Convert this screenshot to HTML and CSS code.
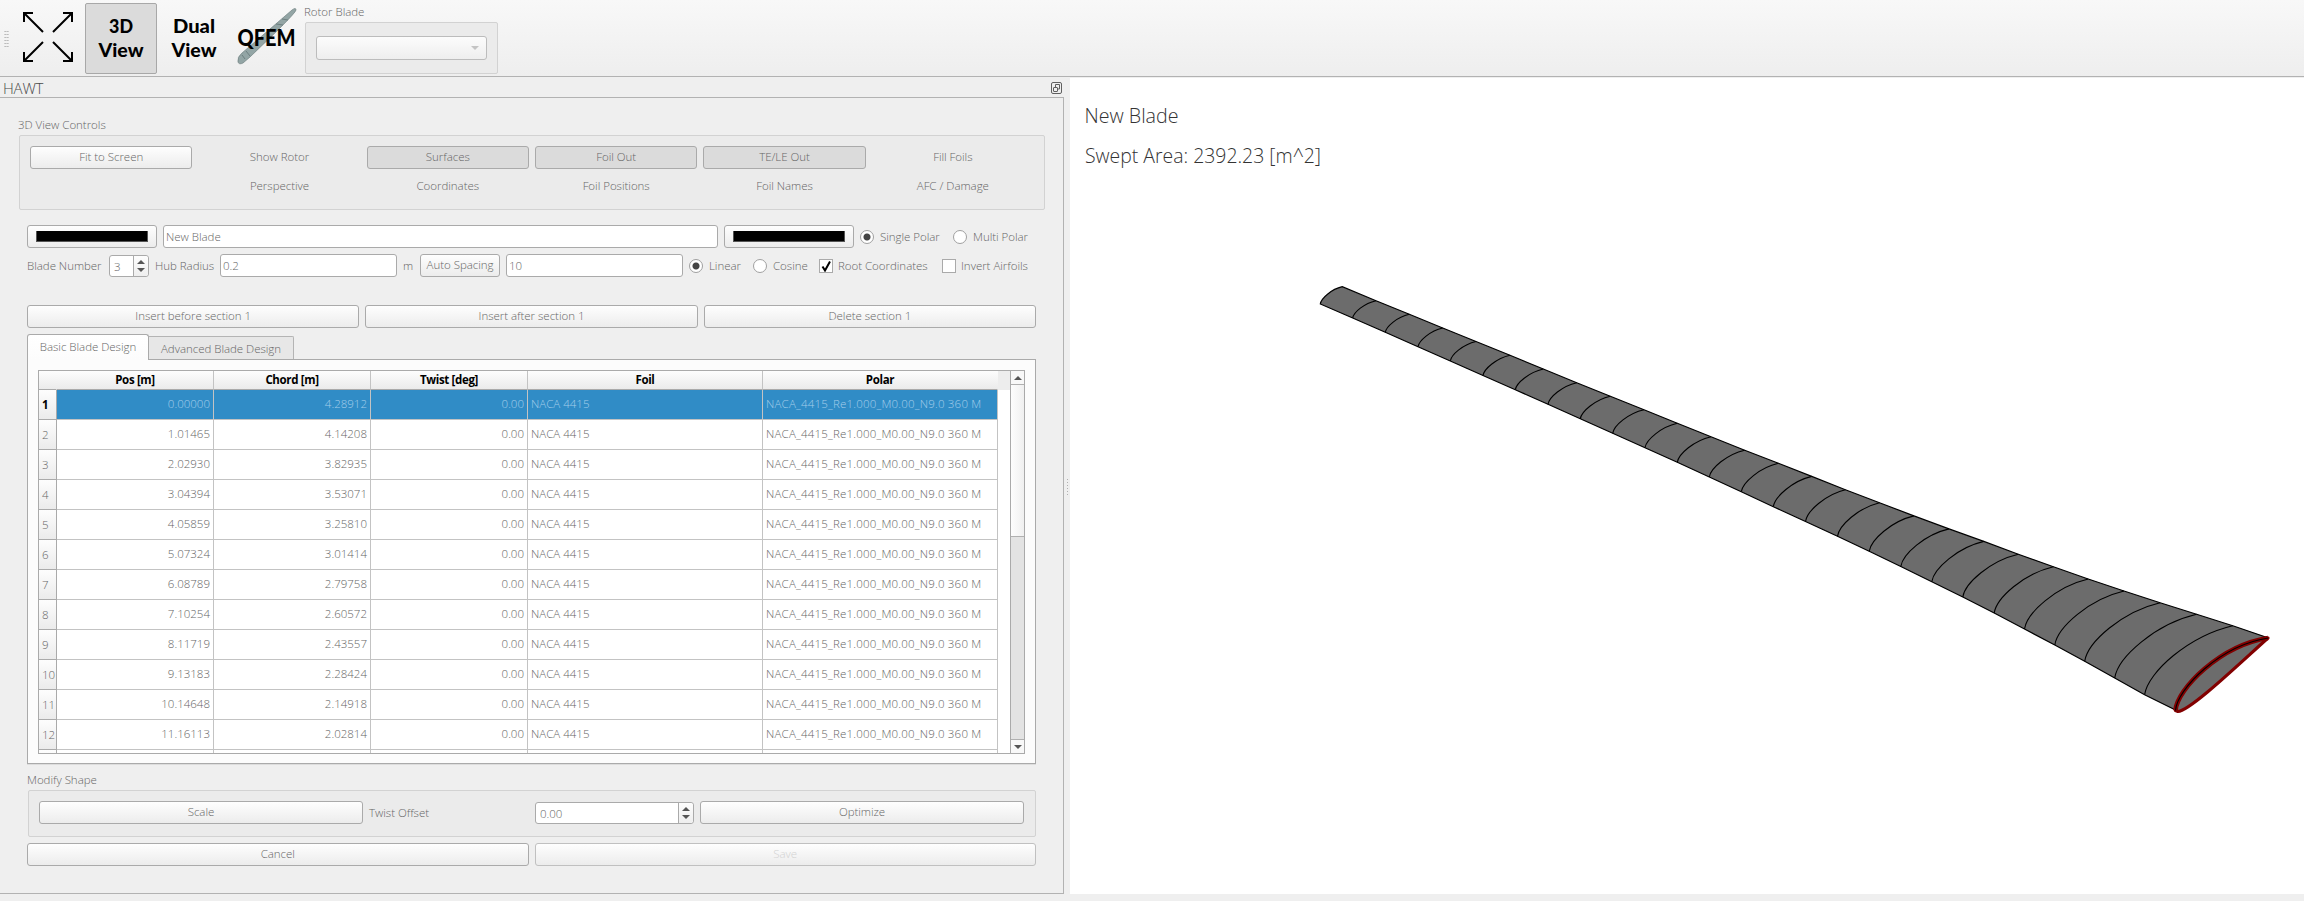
FILE: index.html
```html
<!DOCTYPE html>
<html lang="en">
<head>
<meta charset="utf-8">
<title>HAWT Blade Design</title>
<link rel="stylesheet" href="styles.css">
</head>
<body>
<header class="toolbar">
  <span class="grip"></span>
  <svg class="expand" width="52" height="52" viewBox="0 0 52 52"><g fill="none" stroke="#000" stroke-width="2"><path d="M21 21 2 2M2 11V2H11"/><path d="M31 21 50 2M41 2H50V11"/><path d="M21 31 2 50M2 41V50H11"/><path d="M31 31 50 50M50 41V50H41"/></g></svg>
  <button class="view-btn checked"><svg width="70" height="69"><text x="35" y="28.500" textLength="24" lengthAdjust="spacingAndGlyphs">3D</text><text x="35" y="52.500" textLength="45" lengthAdjust="spacingAndGlyphs">View</text></svg></button>
  <button class="view-btn dual"><svg width="70" height="69"><text x="35" y="28.500" textLength="42" lengthAdjust="spacingAndGlyphs">Dual</text><text x="35" y="52.500" textLength="45" lengthAdjust="spacingAndGlyphs">View</text></svg></button>
  <button class="view-btn qfem"><svg width="64" height="69"><path class="qblade" d="M2 58Q1 53 6 49L34 25 56 6Q60 3 60 6Q60 8 42 26L14 53 7 59Q3 61 2 58Z"/><path class="qgrain" d="M34 25 41 26M40 20 47 21M46 15 52 16M10 47 14 52M6 51 9 55"/><text class="big" x="30.500" y="42" textLength="58" lengthAdjust="spacingAndGlyphs">QFEM</text></svg></button>
  <div class="rotor">
    <span class="label">Rotor Blade</span>
    <div class="frame"><div class="combo"><i class="arrow down pale"></i></div></div>
  </div>
</header>

<main class="workspace">
  <section class="dock">
    <div class="dock-title"><span>HAWT</span>
      <svg width="12" height="12" viewBox="0 0 12 12" fill="none" stroke="#606060"><rect x=".5" y=".5" width="10" height="11" rx="1.500"/><rect x="2.500" y="5.500" width="4" height="4" rx=".5"/><path d="M4.500 5V2.500H8.500V7H7"/></svg>
    </div>
    <div class="dock-body">
      <div class="label g1">3D View Controls</div>
      <div class="frame controls">
        <button class="btn">Fit to Screen</button><span>Show Rotor</span><button class="btn on">Surfaces</button><button class="btn on">Foil Out</button><button class="btn on">TE/LE Out</button><span>Fill Foils</span>
        <span></span><span>Perspective</span><span>Coordinates</span><span>Foil Positions</span><span>Foil Names</span><span>AFC / Damage</span>
      </div>
      <div class="row name-row">
        <button class="btn color"><i></i></button>
        <div class="field name">New Blade</div>
        <button class="btn color"><i></i></button>
        <i class="radio sel"></i><span class="w-single">Single Polar</span>
        <i class="radio"></i><span>Multi Polar</span>
      </div>
      <div class="row param-row">
        <span class="w-number">Blade Number</span>
        <div class="spin small"><span>3</span><b><i class="arrow up"></i><i class="arrow down"></i></b></div>
        <span class="w-hub">Hub Radius</span>
        <div class="field num">0.2</div>
        <span class="w-m">m</span>
        <button class="btn auto">Auto Spacing</button>
        <div class="field num2">10</div>
        <i class="radio sel"></i><span class="w-linear">Linear</span>
        <i class="radio"></i><span class="w-cosine">Cosine</span>
        <i class="check"><svg width="12" height="12"><path d="M2.500 6.500 5 10.500 10 1.500" fill="none" stroke="#000" stroke-width="2"/></svg></i><span class="w-root">Root Coordinates</span>
        <i class="check"></i><span>Invert Airfoils</span>
      </div>
      <div class="row thirds">
        <button class="btn">Insert before section 1</button><button class="btn">Insert after section 1</button><button class="btn">Delete section 1</button>
      </div>
      <div class="tabs"><div class="tab active">Basic Blade Design</div><div class="tab">Advanced Blade Design</div></div>
      <div class="pane">
        <div class="table">
          <div class="grid" id="grid">
            <div class="tr head"><div></div><div>Pos [m]</div><div>Chord [m]</div><div>Twist [deg]</div><div>Foil</div><div>Polar</div></div>
          </div>
          <div class="side"></div>
          <div class="scroll"><div class="sb"><i class="arrow up"></i></div><div class="thumb"></div><div class="trough"></div><div class="sb last"><i class="arrow down"></i></div></div>
        </div>
      </div>
      <div class="label g2">Modify Shape</div>
      <div class="frame modify">
        <button class="btn wide">Scale</button>
        <span class="w-twist">Twist Offset</span>
        <div class="spin offset"><span>0.00</span><b><i class="arrow up"></i><i class="arrow down"></i></b></div>
        <button class="btn wide">Optimize</button>
      </div>
      <div class="row final"><button class="btn">Cancel</button><button class="btn disabled">Save</button></div>
    </div>
  </section>
  <div class="splitter"><i></i></div>
  <section class="view3d">
    <svg id="scene" width="1234" height="816" viewBox="1070 78 1234 816">
      <text x="1084.500" y="123" textLength="94" lengthAdjust="spacingAndGlyphs">New Blade</text>
      <text x="1085" y="163" textLength="236" lengthAdjust="spacingAndGlyphs">Swept Area: 2392.23 [m^2]</text>
    </svg>
  </section>
</main>
<script src="app.js"></script>
</body>
</html>
```
FILE: app.js
```js
// Blade sections: position and chord, twist is zero everywhere
const sections = [
  ["0.00000", "4.28912"], ["1.01465", "4.14208"], ["2.02930", "3.82935"],
  ["3.04394", "3.53071"], ["4.05859", "3.25810"], ["5.07324", "3.01414"],
  ["6.08789", "2.79758"], ["7.10254", "2.60572"], ["8.11719", "2.43557"],
  ["9.13183", "2.28424"], ["10.14648", "2.14918"], ["11.16113", "2.02814"],
];
const grid = document.getElementById("grid");
sections.forEach(([pos, chord], i) => {
  const tr = document.createElement("div");
  tr.className = "tr" + (i === 0 ? " selected" : "");
  tr.innerHTML = [i + 1, pos, chord, "0.00", "NACA 4415", "NACA_4415_Re1.000_M0.00_N9.0 360 M"]
    .map(v => `<div>${v}</div>`).join("");
  grid.append(tr);
});
const stub = document.createElement("div");
stub.className = "tr stub";
stub.innerHTML = "<div></div>".repeat(6);
grid.append(stub);

// Projected trailing and leading edge points, from tip to root
const te = [[1342.3,286.7],[1376,300.7],[1409.3,314.3],[1442.7,328],[1476,341.5],[1510,355.3],[1543.3,369],[1576.7,382.7],[1610.3,396.3],[1644,409.7],[1677.3,423.3],[1711,436.7],[1744.7,450.2],[1778.4,463.3],[1811.7,476.4],[1845.4,489.7],[1879.5,502.7],[1913.9,515.9],[1949,528.9],[1983.8,541.4],[2018.3,554.2],[2053.4,566.7],[2088.2,579],[2124,591],[2160.1,602.7],[2196.6,614.3],[2232.8,625.7],[2267.6,637.6]];
const le = [[1320.3,304],[1352.7,318],[1385.3,332.3],[1418,346.7],[1450.3,361],[1483,375.5],[1515.3,389.7],[1548,404.3],[1580.3,418.8],[1612.7,433.3],[1645,447.7],[1677.3,462.3],[1709.3,477],[1741.3,491.7],[1773.3,506.7],[1805.5,521.5],[1837.5,536.3],[1869.2,551.3],[1900.8,566.5],[1931.8,581.7],[1962.8,597],[1994.2,613],[2024.5,629],[2054.8,645],[2084.7,661.3],[2114.7,678],[2144.6,694.7],[2175.6,710]];
const ns = "http://www.w3.org/2000/svg";
const scene = document.getElementById("scene");
const path = (d, cls) => {
  const p = document.createElementNS(ns, "path");
  p.setAttribute("d", d);
  p.setAttribute("class", cls);
  scene.append(p);
};
const arc = (l, t) => {
  const dx = t[0] - l[0], dy = t[1] - l[1];
  return `C${l[0] + .04 * dx} ${l[1] + .33 * dy} ${l[0] + .5 * dx} ${l[1] + .85 * dy} ${t[0]} ${t[1]}`;
};
path(`M${le[0]}${arc(le[0], te[0])}L${te.slice(1).join("L")}L${le.slice().reverse().join("L")}Z`, "skin");
le.slice(1, -1).forEach((l, i) => path(`M${l}${arc(l, te[i + 1])}`, "rib"));
const upper = "M2175.500 710.500C2177 689 2220 645.500 2268 638";
path(upper + "C2240 663 2190 711 2178 711.500L2175.500 710.500Z", "root");
path(upper, "root-upper");
path(upper, "rib");
```
FILE: styles.css
```css
* { box-sizing: border-box; }
body { margin: 0; width: 2304px; height: 901px; overflow: hidden; background: #efefef; color: #666; font: 300 11.5px/14px "Open Sans", "Noto Sans", sans-serif; letter-spacing: -.03px; }
button { font: inherit; color: inherit; letter-spacing: inherit; padding: 0; }
.toolbar { height: 77px; display: flex; border-bottom: 1px solid #b2b2b2; background: linear-gradient(#f8f8f8, #eeeeee); }
.grip { width: 5px; height: 17px; margin: 30px 13px 0 4px; background: radial-gradient(circle, #b4b4b4 .7px, transparent 1px) 0 0 / 2.500px 3px; }
.expand { margin: 11px 11px 0 0; }
.view-btn { width: 72px; height: 71px; margin-top: 3px; border: 1px solid transparent; border-radius: 2px; background: none; }
.view-btn svg { display: block; overflow: visible; }
.view-btn text { font: 900 19px Lato, sans-serif; letter-spacing: 0; fill: #000; text-anchor: middle; }
.view-btn.checked { background: #dbdbdb; border-color: #a8a8a8; }
.view-btn.dual { margin-left: 1px; }
.view-btn.qfem { width: 66px; margin-left: 5px; }
.view-btn text.big { font-size: 23px; }
.qblade { fill: #93a5a5; stroke: #718282; stroke-width: .7; }
.qgrain { fill: none; stroke: #6d7f80; }
.rotor { margin-left: 4px; padding-top: 5px; }
.rotor .label { display: block; height: 17px; margin-left: -1px; }
.frame { border: 1px solid #d2d2d2; border-radius: 2px; background: #ebebeb; }
.rotor .frame { width: 193px; height: 52px; padding: 13px 10px; }
.combo { height: 24px; border: 1px solid #bcbcbc; border-radius: 3px; background: linear-gradient(#fcfcfc, #eee); display: flex; align-items: center; justify-content: flex-end; padding-right: 7px; }
.arrow { width: 0; height: 0; border: 4px solid transparent; }
.arrow.down { border-top-color: #555; border-bottom: 0; }
.arrow.up { border-bottom-color: #555; border-top: 0; }
.arrow.pale { border-top-color: #c4c4c4; }

.workspace { display: flex; height: 817px; }
.dock { width: 1064px; height: 817px; display: flex; flex-direction: column; }
.dock-title { height: 20px; flex: none; display: flex; justify-content: space-between; padding: 4px 1px 0 3px; font-size: 15px; line-height: 14px; color: #484848; letter-spacing: -.2px; }
.dock-title svg { margin-top: 1px; }
.dock-body { flex: 1; border: 1px solid #b2b2b2; border-left: 0; padding: 20px 27px 0 27px; }
.label.g1 { margin-left: -9px; height: 17px; }
.controls { width: 1026px; height: 75px; margin-left: -8px; padding: 10px; display: grid; grid-template-columns: repeat(6, 1fr); grid-auto-rows: 23px; gap: 6px; }
.controls span { text-align: center; line-height: 22px; }
.btn { height: 23px; border: 1px solid #aaa; border-radius: 3px; background: linear-gradient(#fefefe, #ececec); display: flex; align-items: center; justify-content: center; padding-bottom: 1px; }
.btn.on { background: #dbdbdb; }
.btn.disabled { color: #d2d2d2; border-color: #c0c0c0; }
.row { display: flex; width: 1009px; }
.name-row { margin-top: 15px; align-items: center; height: 23px; white-space: nowrap; }
.color { width: 130px; margin-right: 6px; padding: 0; }
.color i { width: 112px; height: 11px; background: #000; border: 1px solid #555; border-top: 0; }
.field { height: 23px; border: 1px solid #aaa; border-radius: 3px; background: #fff; padding: 4px 2px; }
.name { width: 555px; margin-right: 6px; }
.radio { flex: none; width: 14px; height: 14px; border-radius: 50%; border: 1px solid #a0a0a0; background: #fff; margin-right: 6px; }
.radio.sel { background: radial-gradient(circle, #444 3px, #fff 4px); }
.w-single { width: 73px; }
.param-row { margin-top: 6px; height: 23px; align-items: center; white-space: nowrap; }
.w-number { width: 82px; }
.spin { display: flex; height: 22px; margin-top: 1px; border: 1px solid #aaa; border-radius: 3px; background: #fff; }
.spin span { flex: 1; padding: 4px; }
.spin b { width: 15px; border-left: 1px solid #aaa; background: linear-gradient(#fdfdfd, #eee); border-radius: 0 3px 3px 0; display: flex; flex-direction: column; align-items: center; justify-content: center; gap: 4px; }
.small { width: 40px; margin-right: 6px; }
.w-hub { width: 65px; }
.num { width: 177px; margin-right: 6px; }
.w-m { width: 17px; }
.auto { width: 80px; margin-right: 6px; }
.num2 { width: 177px; margin-right: 6px; }
.w-linear { width: 44px; }
.w-cosine { width: 46px; }
.check { flex: none; width: 14px; height: 14px; border: 1px solid #aaa; background: #fff; margin-right: 5px; }
.check svg { display: block; }
.w-root { width: 104px; }
.thirds { margin-top: 28px; gap: 6px; }
.thirds .btn, .final .btn { flex: 1; }
.tabs { display: flex; align-items: flex-end; height: 31px; }
.tab { position: relative; width: 145px; height: 23px; border: 1px solid #b4b4b4; border-bottom: 0; border-left: 0; border-radius: 0 2px 0 0; background: #e7e7e7; text-align: center; padding-top: 5px; }
.tab.active { z-index: 1; width: 122px; height: 26px; margin-bottom: -1px; border: 1px solid #aaa; border-bottom: 0; border-radius: 3px 3px 0 0; background: linear-gradient(#fff, #fcfcfc); }
.pane { width: 1009px; height: 405px; border: 1px solid #aaa; background: #fcfcfc; padding: 10px; box-shadow: 0 1px #ddd; }
.table { display: flex; width: 987px; height: 384px; border: 1px solid #aaa; background: #fff; overflow: hidden; }
.grid { width: 959px; flex: none; }
.tr { display: grid; grid-template-columns: 18px 157px 157px 157px 235px 235px; height: 30px; }
.tr div { border-right: 1px solid #c3c3c3; border-bottom: 1px solid #c3c3c3; padding: 7px 3px 0; text-align: right; letter-spacing: 0; white-space: nowrap; }
.tr div:nth-child(n+5) { text-align: left; }
.tr div:nth-child(6) { letter-spacing: .2px; }
.tr div:first-child { text-align: left; padding: 8px 0 0 3px; background: linear-gradient(#fdfdfd, #ebebeb); border-color: #aaa; }
.tr.head { height: 19px; }
.tr.head div { text-align: center; padding: 2px 0 0; font-weight: 700; color: #000; letter-spacing: -.35px; background: linear-gradient(#fdfdfd, #ebebeb); border-bottom-color: #aaa; }
.tr.head div:first-child, .tr.head div:last-child { border-right-color: transparent; }
.tr.selected div { background: #308cc6; color: #a4cdea; }
.tr.selected div:first-child { background: linear-gradient(#fdfdfd, #ebebeb); color: #000; font-weight: 700; }
.tr.stub div { height: 30px; }
.side { width: 12px; height: 19px; background: #ededed; }
.scroll { flex: 1; display: flex; flex-direction: column; border-left: 1px solid #aaa; background: #e3e3e3; }
.sb { height: 14px; background: #f8f8f8; border-bottom: 1px solid #b0b0b0; display: flex; align-items: center; justify-content: center; }
.sb.last { border-bottom: 0; border-top: 1px solid #b0b0b0; }
.thumb { height: 152px; background: linear-gradient(90deg, #fdfdfd, #f0f0f0); border-bottom: 1px solid #b0b0b0; }
.trough { flex: 1; }
.label.g2 { margin-top: 9px; height: 17px; }
.modify { width: 1008px; height: 47px; margin-left: 1px; padding: 10px; display: flex; }
.wide { width: 324px; }
.w-twist { width: 172px; padding: 5px 0 0 6px; }
.offset { width: 159px; margin-right: 6px; }
.final { margin-top: 6px; gap: 6px; }

.splitter { width: 6px; height: 817px; padding: 402px 0 0 3px; }
.splitter i { display: block; width: 1px; height: 17px; background: repeating-linear-gradient(#b0b0b0 0 1px, transparent 1px 3px); }
.view3d { width: 1234px; height: 816px; margin-top: 1px; background: #fff; }
#scene { display: block; }
#scene text { font: 300 20px "Open Sans", "Noto Sans", sans-serif; letter-spacing: 0; fill: #333; }
.skin { fill: #6c6c6c; stroke: #000; stroke-width: 1.2; }
.rib { fill: none; stroke: #000; stroke-width: 1.1; }
.root { fill: #6c6c6c; stroke: #820000; stroke-width: 3.2; stroke-linejoin: round; }
.root-upper { fill: none; stroke: #820000; stroke-width: 4.6; }
```
